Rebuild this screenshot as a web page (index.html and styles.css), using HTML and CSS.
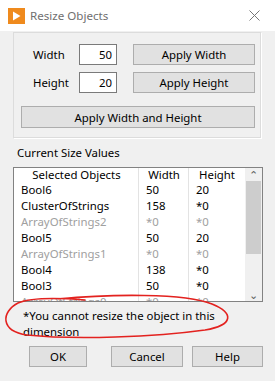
FILE: index.html
```html
<!DOCTYPE html>
<html lang="en">
<head>
    <meta charset="UTF-8">
    <title>Resize Objects</title>
    <link rel="stylesheet" href="styles.css">
</head>
<body>
<div class="window">
    <div class="titlebar">
        <svg class="app-icon" width="17" height="16" viewBox="0 0 17 16">
            <rect width="17" height="16" fill="#ef8a1d"/>
            <path d="M5 3.5 L12.5 8 L5 12.5 Z" fill="#fff"/>
        </svg>
        <span class="title">Resize Objects</span>
        <svg class="close" width="11" height="11" viewBox="0 0 11 11">
            <path d="M0.5 0.5 L10.5 10.5 M10.5 0.5 L0.5 10.5" stroke="#777" stroke-width="1" fill="none"/>
        </svg>
    </div>

    <div class="group">
        <div class="size-row">
            <span class="size-label">Width</span>
            <span class="num-box">50</span>
            <button class="btn apply">Apply Width</button>
        </div>
        <div class="size-row">
            <span class="size-label">Height</span>
            <span class="num-box">20</span>
            <button class="btn apply">Apply Height</button>
        </div>
        <button class="btn apply-both">Apply Width and Height</button>
    </div>

    <div class="section-label">Current Size Values</div>

    <div class="listbox">
        <div class="list-cols">
            <div class="list-head">
                <span class="c1">Selected Objects</span>
                <span class="c2">Width</span>
                <span class="c3">Height</span>
            </div>
            <div class="list-row"><span class="c1">Bool6</span><span class="c2">50</span><span class="c3">20</span></div>
            <div class="list-row"><span class="c1">ClusterOfStrings</span><span class="c2">158</span><span class="c3">*0</span></div>
            <div class="list-row dim"><span class="c1">ArrayOfStrings2</span><span class="c2">*0</span><span class="c3">*0</span></div>
            <div class="list-row"><span class="c1">Bool5</span><span class="c2">50</span><span class="c3">20</span></div>
            <div class="list-row dim"><span class="c1">ArrayOfStrings1</span><span class="c2">*0</span><span class="c3">*0</span></div>
            <div class="list-row"><span class="c1">Bool4</span><span class="c2">138</span><span class="c3">*0</span></div>
            <div class="list-row"><span class="c1">Bool3</span><span class="c2">50</span><span class="c3">*0</span></div>
            <div class="list-row dim"><span class="c1">ArrayOfStrings0</span><span class="c2">*0</span><span class="c3">*0</span></div>
        </div>
        <div class="scrollbar">
            <span class="arrow">&#8963;</span>
            <div class="thumb"></div>
            <span class="arrow down">&#8964;</span>
        </div>
    </div>

    <p class="note">*You cannot resize the object in this dimension</p>

    <div class="footer">
        <button class="btn ok">OK</button>
        <button class="btn cancel">Cancel</button>
        <button class="btn help">Help</button>
    </div>

    <!-- red marker circle drawn over the note -->
    <svg class="marker" width="275" height="381" viewBox="0 0 275 381">
        <path d="M58 299 C110 294 185 293 212 304 C234 313 234 325 205 330 C155 337 75 340 27 335 C0 331 1 312 18 303 C32 297 60 298 85 300"
              stroke="#e3221f" stroke-width="1.6" fill="none" stroke-linecap="round"/>
    </svg>
</div>
</body>
</html>
```

FILE: styles.css
```css
body {
    margin: 0;
    font-family: "Noto Sans", sans-serif;
    font-size: 11.4px;
    color: #000;
}
.window {
    position: relative;
    width: 275px;
    height: 381px;
    background: #f0f0f0;
    overflow: hidden;
}
.titlebar {
    height: 31px;
    background: #fff;
    display: flex;
    align-items: center;
    padding-left: 8px;
}
.app-icon {
    margin-top: 1px;
}
.title {
    margin-left: 5px;
    color: #6f6f6f;
    font-size: 11.6px;
}
.close {
    margin-left: auto;
    margin-right: 15px;
}
.group {
    margin: 1px 0 0 13px;
    width: 247px;
    height: 95px;
    padding-top: 10px;
    border: 1px solid #dcdcdc;
    border-right-color: #fff;
    border-bottom-color: #fff;
    box-shadow: inset -1px -1px 0 #dcdcdc;
}
.size-row {
    display: flex;
    align-items: center;
    height: 22px;
    margin-bottom: 6px;
}
.size-label {
    width: 46px;
    padding-left: 19px;
}
.num-box {
    width: 32px;
    height: 19px;
    line-height: 19px;
    padding-right: 4px;
    text-align: right;
    background: #fff;
    border: 1px solid #7a7a7a;
}
.btn {
    font-family: inherit;
    font-size: 11.4px;
    background: #e1e1e1;
    border: 1px solid #adadad;
    padding: 0;
    color: #000;
}
.apply {
    width: 122px;
    height: 21px;
    margin-left: 16px;
}
.apply-both {
    display: block;
    width: 234px;
    height: 22px;
    margin: 13px 0 0 7px;
}
.section-label {
    margin: 6px 0 0 17px;
    height: 22px;
    line-height: 15px;
}
.listbox {
    margin-left: 13px;
    width: 248px;
    height: 133px;
    border: 1px solid #828282;
    background: #fff;
    display: flex;
    overflow: hidden;
}
.list-cols {
    flex: 1;
    background: linear-gradient(to right, transparent 124px, #e3e3e3 124px, #e3e3e3 125px, transparent 125px, transparent 174px, #e3e3e3 174px, #e3e3e3 175px, transparent 175px);
}
.list-head, .list-row {
    display: flex;
    height: 16px;
    line-height: 16px;
}
.list-head {
    height: 14px;
    line-height: 14px;
}
.list-head span {
    text-align: center;
}
.c1 {
    width: 125px;
}
.c2 {
    width: 50px;
}
.c3 {
    width: 56px;
}
.list-row .c1 {
    padding-left: 7px;
    width: 118px;
}
.list-row .c2 {
    padding-left: 7px;
    width: 43px;
}
.list-row .c3 {
    padding-left: 7px;
    width: 49px;
}
.dim {
    color: #a0a0a0;
}
.scrollbar {
    width: 17px;
    background: #f0f0f0;
    display: flex;
    flex-direction: column;
    align-items: center;
}
.arrow {
    height: 13px;
    line-height: 13px;
    font-size: 11px;
    color: #606060;
}
.thumb {
    width: 15px;
    height: 73px;
    background: #cdcdcd;
}
.arrow.down {
    margin-top: auto;
}
.note {
    margin: 6px 0 0 23px;
    width: 215px;
    line-height: 16px;
}
.footer {
    display: flex;
    margin-top: 6px;
    padding-left: 29px;
}
.ok {
    width: 58px;
    height: 21px;
}
.cancel {
    width: 72px;
    height: 21px;
    margin-left: 24px;
}
.help {
    width: 71px;
    height: 21px;
    margin-left: 9px;
}
.marker {
    position: absolute;
    left: 0;
    top: 0;
    pointer-events: none;
}
```
